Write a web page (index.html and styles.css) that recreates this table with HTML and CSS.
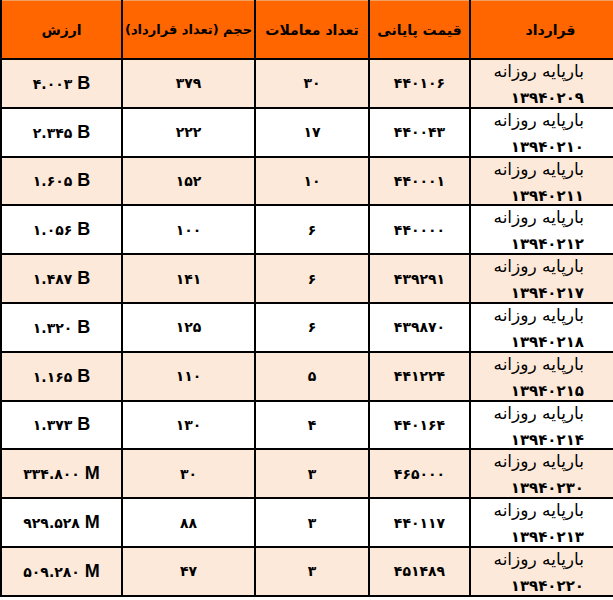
FILE: index.html
```
<!DOCTYPE html>
<html lang="fa">
<head>
<meta charset="utf-8">
<link rel="stylesheet" href="styles.css">
</head>
<body>
<table class="grid">
  <colgroup>
    <col class="c-contract"><col class="c-price"><col class="c-count"><col class="c-vol"><col class="c-value">
  </colgroup>
  <thead>
    <tr class="head">
      <th>قرارداد</th>
      <th>قیمت پایانی</th>
      <th>تعداد معاملات</th>
      <th class="narrow">حجم (تعداد قرارداد)</th>
      <th>ارزش</th>
    </tr>
  </thead>
  <tbody>
    <tr class="alt"><td class="name"><span>بارپایه روزانه</span><b>۱۳۹۴۰۲۰۹</b></td><td>۴۴۰۱۰۶</td><td>۳۰</td><td>۳۷۹</td><td class="val">۴.۰۰۳ <i>B</i></td></tr>
    <tr><td class="name"><span>بارپایه روزانه</span><b>۱۳۹۴۰۲۱۰</b></td><td>۴۴۰۰۴۳</td><td>۱۷</td><td>۲۲۲</td><td class="val">۲.۳۴۵ <i>B</i></td></tr>
    <tr class="alt"><td class="name"><span>بارپایه روزانه</span><b>۱۳۹۴۰۲۱۱</b></td><td>۴۴۰۰۰۱</td><td>۱۰</td><td>۱۵۲</td><td class="val">۱.۶۰۵ <i>B</i></td></tr>
    <tr><td class="name"><span>بارپایه روزانه</span><b>۱۳۹۴۰۲۱۲</b></td><td>۴۴۰۰۰۰</td><td>۶</td><td>۱۰۰</td><td class="val">۱.۰۵۶ <i>B</i></td></tr>
    <tr class="alt"><td class="name"><span>بارپایه روزانه</span><b>۱۳۹۴۰۲۱۷</b></td><td>۴۳۹۲۹۱</td><td>۶</td><td>۱۴۱</td><td class="val">۱.۴۸۷ <i>B</i></td></tr>
    <tr><td class="name"><span>بارپایه روزانه</span><b>۱۳۹۴۰۲۱۸</b></td><td>۴۳۹۸۷۰</td><td>۶</td><td>۱۲۵</td><td class="val">۱.۳۲۰ <i>B</i></td></tr>
    <tr class="alt"><td class="name"><span>بارپایه روزانه</span><b>۱۳۹۴۰۲۱۵</b></td><td>۴۴۱۲۲۴</td><td>۵</td><td>۱۱۰</td><td class="val">۱.۱۶۵ <i>B</i></td></tr>
    <tr><td class="name"><span>بارپایه روزانه</span><b>۱۳۹۴۰۲۱۴</b></td><td>۴۴۰۱۶۴</td><td>۴</td><td>۱۳۰</td><td class="val">۱.۳۷۳ <i>B</i></td></tr>
    <tr class="alt"><td class="name"><span>بارپایه روزانه</span><b>۱۳۹۴۰۲۳۰</b></td><td>۴۶۵۰۰۰</td><td>۳</td><td>۳۰</td><td class="val">۳۳۴.۸۰۰ <i>M</i></td></tr>
    <tr><td class="name"><span>بارپایه روزانه</span><b>۱۳۹۴۰۲۱۳</b></td><td>۴۴۰۱۱۷</td><td>۳</td><td>۸۸</td><td class="val">۹۲۹.۵۲۸ <i>M</i></td></tr>
    <tr class="alt"><td class="name"><span>بارپایه روزانه</span><b>۱۳۹۴۰۲۲۰</b></td><td>۴۵۱۴۸۹</td><td>۳</td><td>۴۷</td><td class="val">۵۰۹.۲۸۰ <i>M</i></td></tr>
  </tbody>
</table>
</body>
</html>
```
FILE: styles.css
```
html, body {
  margin: 0;
  padding: 0;
  background: #ffffff;
}
body {
  overflow: hidden;
  width: 613px;
  height: 600px;
}
.grid {
  direction: rtl;
  border-collapse: collapse;
  table-layout: fixed;
  width: 630px;
  margin-right: -17px;
  font-family: "DejaVu Sans", sans-serif;
  color: #000;
}
.c-contract { width: 161px; }
.c-price { width: 101px; }
.c-count { width: 114px; }
.c-vol { width: 133px; }
.c-value { width: 121px; }

.grid th, .grid td {
  border: 2px solid #000;
  padding: 0;
  text-align: center;
  vertical-align: middle;
  overflow: hidden;
  white-space: nowrap;
}
.head th {
  height: 57px;
  background: #ff6600;
  border-top: 1px solid #f0a060;
  font-size: 14px;
  font-weight: bold;
}
.head th.narrow {
  font-size: 13px;
}
.grid tbody tr {
  height: 48.8px;
}
.grid tbody td {
  font-size: 14px;
  font-weight: bold;
}
.grid tbody tr.alt td {
  background: #fde9d9;
}
.grid td.name {
  text-align: right;
  padding-right: 46px;
  vertical-align: top;
  line-height: 0;
}
.name span {
  display: block;
  height: 22px;
  line-height: 22px;
  font-size: 17px;
  font-weight: normal;
}
.name b {
  display: block;
  height: 22px;
  line-height: 32px;
  font-size: 15px;
  font-weight: bold;
}
.grid td.val {
  direction: ltr;
  font-size: 14px;
}
.val i {
  font-style: normal;
  font-family: "Liberation Sans", Arial, sans-serif;
  font-size: 18px;
  font-weight: bold;
}
```
